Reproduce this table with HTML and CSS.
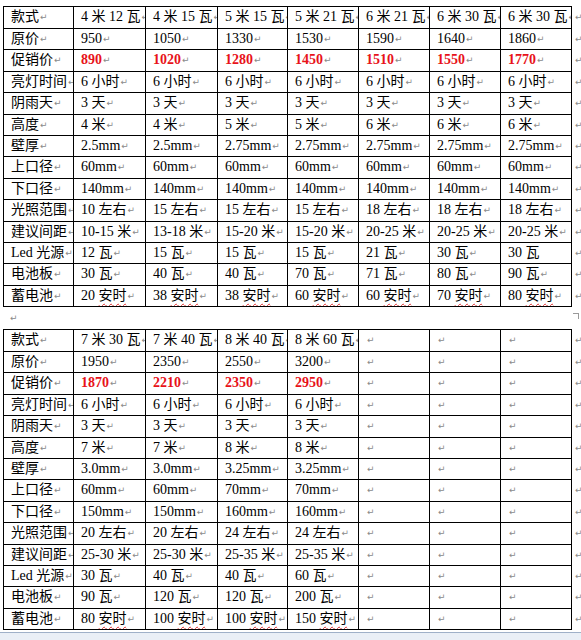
FILE: index.html
```html
<!DOCTYPE html>
<html lang="zh">
<head>
<meta charset="utf-8">
<title>款式价格表</title>
<link rel="stylesheet" href="styles.css">
</head>
<body>
<div class="page">
<table class="spec">
<colgroup><col class="c1"><col class="c2"><col class="c2"><col class="c1"><col class="c3"><col class="c3"><col class="c3"><col class="c3"><col class="ce"></colgroup>
<tr class="t"><td>款式</td><td>4 米 12 瓦</td><td>4 米 15 瓦</td><td>5 米 15 瓦</td><td>5 米 21 瓦</td><td>6 米 21 瓦</td><td>6 米 30 瓦</td><td>6 米 30 瓦</td><td class="eor"></td></tr>
<tr><td>原价</td><td>950</td><td>1050</td><td>1330</td><td>1530</td><td>1590</td><td>1640</td><td>1860</td><td class="eor"></td></tr>
<tr class="sale t"><td>促销价</td><td>890</td><td>1020</td><td>1280</td><td>1450</td><td>1510</td><td>1550</td><td>1770</td><td class="eor"></td></tr>
<tr><td>亮灯时间</td><td>6 小时</td><td>6 小时</td><td>6 小时</td><td>6 小时</td><td>6 小时</td><td>6 小时</td><td>6 小时</td><td class="eor"></td></tr>
<tr class="t"><td>阴雨天</td><td>3 天</td><td>3 天</td><td>3 天</td><td>3 天</td><td>3 天</td><td>3 天</td><td>3 天</td><td class="eor"></td></tr>
<tr><td>高度</td><td>4 米</td><td>4 米</td><td>5 米</td><td>5 米</td><td>6 米</td><td>6 米</td><td>6 米</td><td class="eor"></td></tr>
<tr><td>壁厚</td><td>2.5mm</td><td>2.5mm</td><td>2.75mm</td><td>2.75mm</td><td>2.75mm</td><td>2.75mm</td><td>2.75mm</td><td class="eor"></td></tr>
<tr class="t"><td>上口径</td><td>60mm</td><td>60mm</td><td>60mm</td><td>60mm</td><td>60mm</td><td>60mm</td><td>60mm</td><td class="eor"></td></tr>
<tr><td>下口径</td><td>140mm</td><td>140mm</td><td>140mm</td><td>140mm</td><td>140mm</td><td>140mm</td><td>140mm</td><td class="eor"></td></tr>
<tr class="t"><td>光照范围</td><td>10 左右</td><td>15 左右</td><td>15 左右</td><td>15 左右</td><td>18 左右</td><td>18 左右</td><td>18 左右</td><td class="eor"></td></tr>
<tr><td>建议间距</td><td>10-15 米</td><td>13-18 米</td><td>15-20 米</td><td>15-20 米</td><td>20-25 米</td><td>20-25 米</td><td>20-25 米</td><td class="eor"></td></tr>
<tr><td>Led 光源</td><td>12 瓦</td><td>15 瓦</td><td>15 瓦</td><td>15 瓦</td><td>21 瓦</td><td>30 瓦</td><td class="nopm">30 瓦</td><td class="eor"></td></tr>
<tr class="t"><td>电池板</td><td>30 瓦</td><td>40 瓦</td><td>40 瓦</td><td>70 瓦</td><td>71 瓦</td><td>80 瓦</td><td>90 瓦</td><td class="eor"></td></tr>
<tr><td>蓄电池</td><td>20 <span class="sp">安时</span></td><td>38 <span class="sp">安时</span></td><td>38 <span class="sp">安时</span></td><td>60 <span class="sp">安时</span></td><td>60 <span class="sp">安时</span></td><td>70 <span class="sp">安时</span></td><td>80 <span class="sp">安时</span></td><td class="eor"></td></tr>
</table>
<div class="para"><span class="handle"></span></div>
<table class="spec">
<colgroup><col class="c1"><col class="c2"><col class="c2"><col class="c1"><col class="c3"><col class="c3"><col class="c3"><col class="c3"><col class="ce"></colgroup>
<tr class="t"><td>款式</td><td>7 米 30 瓦</td><td>7 米 40 瓦</td><td>8 米 40 瓦</td><td>8 米 60 瓦</td><td></td><td></td><td></td><td class="eor"></td></tr>
<tr><td>原价</td><td>1950</td><td>2350</td><td>2550</td><td>3200</td><td></td><td></td><td></td><td class="eor"></td></tr>
<tr class="sale t"><td>促销价</td><td>1870</td><td>2210</td><td>2350</td><td>2950</td><td></td><td></td><td></td><td class="eor"></td></tr>
<tr><td>亮灯时间</td><td>6 小时</td><td>6 小时</td><td>6 小时</td><td>6 小时</td><td></td><td></td><td></td><td class="eor"></td></tr>
<tr class="t"><td>阴雨天</td><td>3 天</td><td>3 天</td><td>3 天</td><td>3 天</td><td></td><td></td><td></td><td class="eor"></td></tr>
<tr><td>高度</td><td>7 米</td><td>7 米</td><td>8 米</td><td>8 米</td><td></td><td></td><td></td><td class="eor"></td></tr>
<tr><td>壁厚</td><td>3.0mm</td><td>3.0mm</td><td>3.25mm</td><td>3.25mm</td><td></td><td></td><td></td><td class="eor"></td></tr>
<tr class="t"><td>上口径</td><td>60mm</td><td>60mm</td><td>70mm</td><td>70mm</td><td></td><td></td><td></td><td class="eor"></td></tr>
<tr><td>下口径</td><td>150mm</td><td>150mm</td><td>160mm</td><td>160mm</td><td></td><td></td><td></td><td class="eor"></td></tr>
<tr class="t"><td>光照范围</td><td>20 左右</td><td>20 左右</td><td>24 左右</td><td>24 左右</td><td></td><td></td><td></td><td class="eor"></td></tr>
<tr><td>建议间距</td><td>25-30 米</td><td>25-30 米</td><td>25-35 米</td><td>25-35 米</td><td></td><td></td><td></td><td class="eor"></td></tr>
<tr><td>Led 光源</td><td>30 瓦</td><td>40 瓦</td><td>40 瓦</td><td>60 瓦</td><td></td><td></td><td></td><td class="eor"></td></tr>
<tr class="t"><td>电池板</td><td>90 瓦</td><td>120 瓦</td><td>120 瓦</td><td>200 瓦</td><td></td><td></td><td></td><td class="eor"></td></tr>
<tr><td>蓄电池</td><td>80 <span class="sp">安时</span></td><td>100 <span class="sp">安时</span></td><td>100 <span class="sp">安时</span></td><td>150 <span class="sp">安时</span></td><td></td><td></td><td></td><td class="eor"></td></tr>
</table>
</div>
<div class="status"></div>
</body>
</html>
```
FILE: styles.css
```css
html, body {
  margin: 0;
  padding: 0;
  background: #ffffff;
  overflow: hidden;
}
body {
  width: 581px;
  height: 640px;
  font-family: "Liberation Serif", "Noto Sans CJK SC", serif;
  font-size: 14px;
  color: #000;
}
.page {
  padding: 6px 0 0 3px;
  height: 626px;
}
.spec {
  border-collapse: collapse;
  table-layout: fixed;
  width: 578px;
}
.c1 { width: 70px; }
.c2 { width: 72px; }
.c3 { width: 71px; }
.ce { width: 10px; }
.spec td {
  border: 1px solid #000;
  height: 20px;
  padding: 0 0 0 7px;
  line-height: 17px;
  white-space: nowrap;
  overflow: hidden;
  vertical-align: middle;
}
.spec tr.t td {
  height: 21px;
}
.spec td::after {
  content: "↵";
  font-family: "DejaVu Sans", sans-serif;
  font-size: 9px;
  font-weight: normal;
  color: #8a8a8a;
  margin-left: 1px;
  position: relative;
  top: -1px;
}
.spec td.nopm::after { content: ""; }
.spec td.eor {
  border: none;
  padding: 0 0 0 3px;
}
.spec td.eor::after {
  margin-left: 0;
}
.sale td {
  color: #e8121a;
  font-weight: bold;
}
.sale td:first-child {
  color: #000;
  font-weight: normal;
}
.sp {
  text-decoration: underline wavy #e03030;
  text-decoration-thickness: 1px;
  text-underline-offset: 3px;
}
.para {
  height: 22px;
  padding-left: 7px;
  display: flex;
  align-items: center;
  justify-content: space-between;
}
.para::before {
  content: "↵";
  font-family: "DejaVu Sans", sans-serif;
  font-size: 9px;
  color: #8a8a8a;
}
.handle {
  width: 5px;
  height: 5px;
  border: 1px solid #9a9a9a;
  border-left: none;
  border-bottom: none;
  margin-right: 2px;
  align-self: flex-start;
  margin-top: 6px;
}
.status {
  height: 7px;
  border-top: 1px solid #9fb0c8;
  background: #eaeff6;
}
```
